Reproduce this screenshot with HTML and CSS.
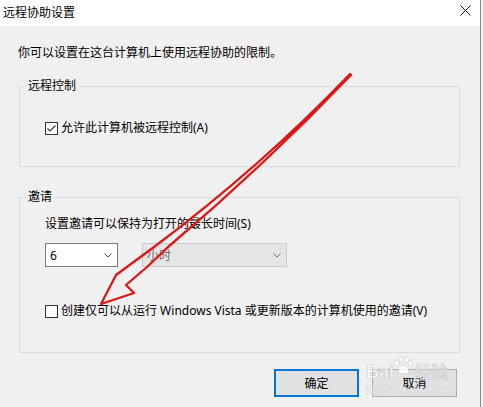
FILE: index.html
```
<!DOCTYPE html>
<html lang="zh-CN">
<head>
    <meta charset="UTF-8">
    <meta name="viewport" content="width=device-width, initial-scale=1.0">
    <title>远程协助设置</title>
    <link rel="stylesheet" href="styles.css">
</head>
<body>
    <div class="window">
        <div class="titlebar">
            <span class="title">远程协助设置</span>
            <svg class="close" width="11" height="11" viewBox="0 0 11 11">
                <path d="M0.5 0.5 L10.5 10.5 M10.5 0.5 L0.5 10.5" stroke="#111" stroke-width="1" fill="none"/>
            </svg>
        </div>

        <div class="content">
            <p class="intro">你可以设置在这台计算机上使用远程协助的限制。</p>

            <fieldset class="group group-remote">
                <legend>远程控制</legend>
                <label class="check">
                    <span class="box">
                        <svg width="11" height="11" viewBox="0 0 11 11">
                            <polyline points="1.5,5.5 4,8 9.5,2.5" stroke="#333" stroke-width="1.1" fill="none"/>
                        </svg>
                    </span>
                    允许此计算机被远程控制(A)
                </label>
            </fieldset>

            <fieldset class="group group-invite">
                <legend>邀请</legend>
                <div class="field-label">设置邀请可以保持为打开的最长时间(S)</div>
                <div class="combos">
                    <div class="combo combo-num">
                        <span>6</span>
                        <svg width="8" height="5" viewBox="0 0 8 5"><polyline points="0.5,0.5 4,4 7.5,0.5" stroke="#555" fill="none"/></svg>
                    </div>
                    <div class="combo combo-unit disabled">
                        <span>小时</span>
                        <svg width="8" height="5" viewBox="0 0 8 5"><polyline points="0.5,0.5 4,4 7.5,0.5" stroke="#707070" fill="none"/></svg>
                    </div>
                </div>
                <label class="check check-vista">
                    <span class="box"></span>
                    创建仅可以从运行 Windows Vista 或更新版本的计算机使用的邀请(V)
                </label>
            </fieldset>

            <div class="buttons">
                <button class="btn btn-default">确定</button>
                <button class="btn">取消</button>
            </div>
        </div>

        <!-- red hand-drawn arrow on top of the dialog -->
        <svg class="annotation" width="480" height="407" viewBox="0 0 480 407">
            <path d="M350,74 Q262,166 154,247 L116,275 L101,304 L134,293 L126,285 L147,267 L168,247 Q264,166 351,75 Z"
                  fill="none" stroke="#e01616" stroke-width="2.3" stroke-linejoin="round"/>
        </svg>

        <div class="watermark">
            <div class="wm-logo">
                <span class="wm-bai">Bai</span>
                <svg class="wm-paw" width="22" height="20" viewBox="0 0 24 20">
                    <g fill="#fff" stroke="#c8c8c8" stroke-width="0.8">
                        <ellipse cx="5" cy="7" rx="2.6" ry="3.2"/>
                        <ellipse cx="10" cy="3.5" rx="2.6" ry="3.2"/>
                        <ellipse cx="15.5" cy="3.5" rx="2.6" ry="3.2"/>
                        <ellipse cx="20" cy="7.5" rx="2.6" ry="3.2"/>
                        <path d="M7,16 C7,11 10,9.5 12.5,9.5 C15,9.5 18,11 18,16 C18,19 15,19 12.5,18 C10,19 7,19 7,16 Z"/>
                    </g>
                </svg>
                <span class="wm-jy">经验</span>
            </div>
            <div class="wm-url">jingyan.baidu.com</div>
        </div>
    </div>
</body>
</html>
```

FILE: styles.css
```
body {
    margin: 0;
    background-color: #f0f0f0;
    font-family: "Segoe UI", "Noto Sans", "Microsoft YaHei", "Noto Sans CJK SC", sans-serif;
    font-size: 12px;
    color: #000;
}
.window {
    position: relative;
    width: 480px;
    height: 407px;
    border-right: 1px solid #8c8c8c;
    background-color: #f0f0f0;
    overflow: hidden;
}
.titlebar {
    height: 26px;
    display: flex;
    align-items: center;
    justify-content: space-between;
    padding: 0 9px 0 3px;
    background-color: #fff;
    line-height: 16px;
}
.close {
    margin-bottom: 5px;
}
.content {
    padding: 0 20px 0 19px;
}
.intro {
    margin: 19px 0 0 -1px;
    line-height: 16px;
}
/* group boxes */
.group {
    margin: 0;
    border: 1px solid #dcdcdc;
    padding: 0 0 0 6px;
    min-width: 0;
}
.group legend {
    padding: 0 2px;
    line-height: 16px;
}
.group-remote {
    margin-top: 17px;
    padding-bottom: 30px;
}
.group-invite {
    margin-top: 22px;
    padding-bottom: 33px;
}
.check {
    display: flex;
    align-items: center;
    height: 16px;
    margin-left: 19px;
    line-height: 16px;
}
.group-remote .check {
    margin-top: 26px;
}
.check-vista {
    margin-top: 36px;
}
.box {
    width: 11px;
    height: 11px;
    border: 1px solid #333;
    background-color: #fff;
    margin-right: 3px;
    display: flex;
}
.field-label {
    margin: 11px 0 0 19px;
    line-height: 16px;
}
.combos {
    display: flex;
    gap: 24px;
    margin: 11px 0 0 19px;
}
.combo {
    height: 22px;
    display: flex;
    align-items: center;
    justify-content: space-between;
    padding: 0 5px 0 4px;
    border: 1px solid #7a7a7a;
    background-color: #fff;
}
.combo-num {
    width: 62px;
}
.combo-unit {
    width: 134px;
}
.combo.disabled {
    border-color: #cccccc;
    background-color: #e5e5e5;
    color: #6e6e6e;
}
.combo svg {
    margin-top: 1px;
}
/* dialog buttons */
.buttons {
    display: flex;
    justify-content: flex-end;
    gap: 13px;
    margin: 16px 3px 0 0;
}
.btn {
    width: 85px;
    height: 28px;
    border: 1px solid #adadad;
    background-color: #e1e1e1;
    font-family: inherit;
    font-size: 12px;
    color: #000;
    padding: 0;
}
.btn-default {
    border: 2px solid #0078d7;
}
.annotation {
    position: absolute;
    left: 0;
    top: 0;
    pointer-events: none;
}
/* faint site watermark over the bottom-right corner */
.watermark {
    position: absolute;
    left: 366px;
    top: 359px;
    opacity: 0.85;
    pointer-events: none;
}
.wm-logo {
    display: flex;
    align-items: flex-end;
    height: 22px;
}
.wm-bai {
    font-family: "Liberation Sans", sans-serif;
    font-weight: bold;
    font-size: 18px;
    line-height: 18px;
    color: #fff;
    -webkit-text-stroke: 0.6px #c4c4c4;
}
.wm-paw {
    margin: 0 0 5px -2px;
}
.wm-jy {
    font-size: 17px;
    line-height: 18px;
    color: #fff;
    -webkit-text-stroke: 0.6px #c4c4c4;
}
.wm-url {
    font-family: "Liberation Sans", sans-serif;
    font-size: 9px;
    letter-spacing: 0.8px;
    line-height: 10px;
    margin-top: 4px;
    color: #fff;
    -webkit-text-stroke: 0.3px #c8c8c8;
}
```
